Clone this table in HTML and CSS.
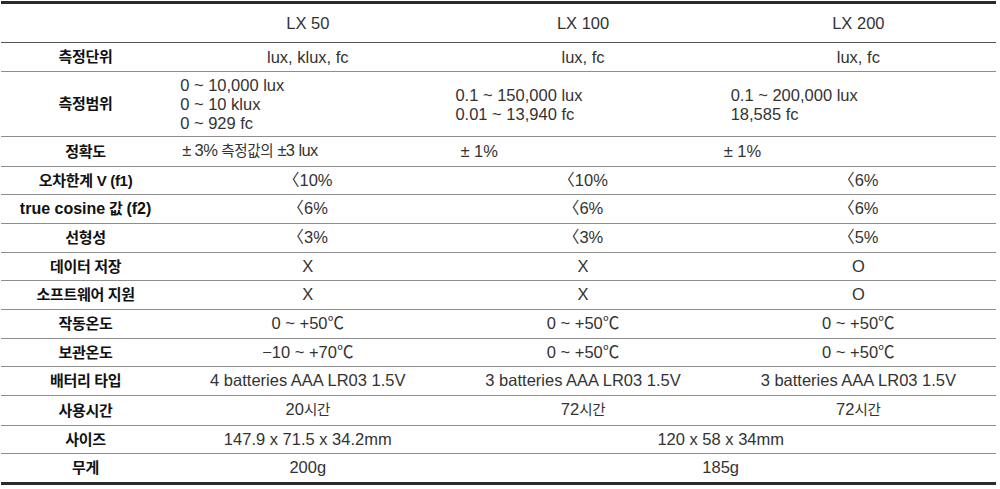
FILE: index.html
```html
<!DOCTYPE html>
<html lang="ko">
<head>
<meta charset="utf-8">
<title>LX 사양 비교</title>
<link rel="stylesheet" href="styles.css">
</head>
<body>
<table class="spec">
  <colgroup>
    <col class="c-label">
    <col class="c-model">
    <col class="c-model">
    <col class="c-model">
  </colgroup>
  <thead>
    <tr class="head">
      <th></th>
      <th>LX 50</th>
      <th>LX 100</th>
      <th>LX 200</th>
    </tr>
  </thead>
  <tbody>
    <tr class="unit">
      <th>측정단위</th>
      <td>lux, klux, fc</td>
      <td>lux, fc</td>
      <td>lux, fc</td>
    </tr>
    <tr class="range">
      <th>측정범위</th>
      <td>0 ~ 10,000 lux<br>0 ~ 10 klux<br>0 ~ 929 fc</td>
      <td>0.1 ~ 150,000 lux<br>0.01 ~ 13,940 fc</td>
      <td>0.1 ~ 200,000 lux<br>18,585 fc</td>
    </tr>
    <tr class="acc">
      <th>정확도</th>
      <td class="tight">± 3% <span class="ko">측정값의</span> ±3 lux</td>
      <td>± 1%</td>
      <td>± 1%</td>
    </tr>
    <tr>
      <th>오차한계 V (f1)</th>
      <td>〈10%</td>
      <td>〈10%</td>
      <td>〈6%</td>
    </tr>
    <tr>
      <th><span class="wide">true cosine</span> 값 <span class="wide">(f2)</span></th>
      <td>〈6%</td>
      <td>〈6%</td>
      <td>〈6%</td>
    </tr>
    <tr>
      <th>선형성</th>
      <td>〈3%</td>
      <td>〈3%</td>
      <td>〈5%</td>
    </tr>
    <tr>
      <th>데이터 저장</th>
      <td>X</td>
      <td>X</td>
      <td>O</td>
    </tr>
    <tr>
      <th>소프트웨어 지원</th>
      <td>X</td>
      <td>X</td>
      <td>O</td>
    </tr>
    <tr>
      <th>작동온도</th>
      <td>0 ~ +50℃</td>
      <td>0 ~ +50℃</td>
      <td>0 ~ +50℃</td>
    </tr>
    <tr>
      <th>보관온도</th>
      <td>−10 ~ +70℃</td>
      <td>0 ~ +50℃</td>
      <td>0 ~ +50℃</td>
    </tr>
    <tr>
      <th>배터리 타입</th>
      <td>4 batteries AAA LR03 1.5V</td>
      <td>3 batteries AAA LR03 1.5V</td>
      <td>3 batteries AAA LR03 1.5V</td>
    </tr>
    <tr>
      <th>사용시간</th>
      <td>20<span class="ko">시간</span></td>
      <td>72<span class="ko">시간</span></td>
      <td>72<span class="ko">시간</span></td>
    </tr>
    <tr>
      <th>사이즈</th>
      <td>147.9 x 71.5 x 34.2mm</td>
      <td colspan="2">120 x 58 x 34mm</td>
    </tr>
    <tr class="last">
      <th>무게</th>
      <td>200g</td>
      <td colspan="2">185g</td>
    </tr>
  </tbody>
</table>
</body>
</html>
```

FILE: styles.css
```css
html, body {
  margin: 0;
  background: #ffffff;
}

body {
  padding: 1px 0 0 1px;
  font-family: "Liberation Sans", "Noto Sans CJK KR", sans-serif;
  color: #333333;
}

.spec {
  width: 995px;
  table-layout: fixed;
  border-collapse: separate;
  border-spacing: 0;
  border-top: 3px solid #2a2a2a;
  border-bottom: 3px solid #2a2a2a;
}

.c-label { width: 169px; }
.c-model { width: 275px; }

.spec th,
.spec td {
  padding: 0 8px;
  text-align: center;
  vertical-align: middle;
  white-space: nowrap;
  border-bottom: 1px solid #8e8e8e;
  line-height: 27.67px;
  font-size: 16.5px;
}

.spec tbody th {
  font-size: 15px;
  font-weight: bold;
  color: #111111;
  letter-spacing: -0.3px;
}

.spec tbody th .wide {
  font-size: 16px;
  letter-spacing: 0;
}

.head th {
  font-weight: normal;
  line-height: 38px;
  border-bottom-color: #555555;
}

.unit th,
.unit td {
  line-height: 28px;
}

.range td {
  text-align: left;
  line-height: 19px;
  padding: 4px 10px 3px;
}

.acc td {
  text-align: left;
}

.acc td:nth-child(2) { padding-left: 12px; }
.acc td:nth-child(3) { padding-left: 15px; }
.acc td:nth-child(4) { padding-left: 3px; }

.tight {
  letter-spacing: -0.6px;
}

.ko {
  font-size: 14.5px;
  letter-spacing: -0.3px;
}

.last th,
.last td {
  border-bottom: none;
}
```
